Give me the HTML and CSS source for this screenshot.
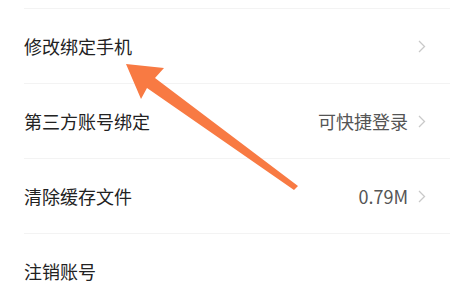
FILE: index.html
```html
<!DOCTYPE html>
<html lang="zh-CN">
<head>
    <meta charset="UTF-8">
    <meta name="viewport" content="width=device-width, initial-scale=1.0">
    <title>账号设置</title>
    <link rel="stylesheet" href="styles.css">
</head>
<body>
    <div class="settings-list">
        <div class="row">
            <span class="label">修改绑定手机</span>
            <span class="chevron"><svg width="8" height="13" viewBox="0 0 8 13"><path d="M1 1l5.5 5.5L1 12" fill="none" stroke="#c9c9c9" stroke-width="1.3"/></svg></span>
        </div>
        <div class="row">
            <span class="label">第三方账号绑定</span>
            <span class="value">可快捷登录</span>
            <span class="chevron"><svg width="8" height="13" viewBox="0 0 8 13"><path d="M1 1l5.5 5.5L1 12" fill="none" stroke="#c9c9c9" stroke-width="1.3"/></svg></span>
        </div>
        <div class="row">
            <span class="label">清除缓存文件</span>
            <span class="value">0.79M</span>
            <span class="chevron"><svg width="8" height="13" viewBox="0 0 8 13"><path d="M1 1l5.5 5.5L1 12" fill="none" stroke="#c9c9c9" stroke-width="1.3"/></svg></span>
        </div>
        <div class="row">
            <span class="label">注销账号</span>
        </div>
    </div>

    <!-- Annotation arrow -->
    <svg class="arrow" width="450" height="294" viewBox="0 0 450 294">
        <polygon points="126,64 164,68 155,78 298,186 294,190 147,88 141,99" fill="#f87a43"/>
    </svg>
</body>
</html>
```

FILE: styles.css
```css
body {
    margin: 0;
    background-color: #fff;
    font-family: "Noto Sans CJK SC", "Noto Sans", sans-serif;
    overflow: hidden;
}
.settings-list {
    padding-top: 8px;
}
.row {
    display: flex;
    align-items: center;
    height: 74px;
    margin-left: 24px;
    padding-right: 24px;
    border-top: 1px solid #f3f3f3;
}
.label {
    flex: 1;
    font-size: 18px;
    color: #222;
}
.value {
    font-size: 18px;
    color: #555;
    margin-right: 10px;
}
.chevron {
    display: flex;
    width: 8px;
}
.arrow {
    position: absolute;
    left: 0;
    top: 0;
}
```
